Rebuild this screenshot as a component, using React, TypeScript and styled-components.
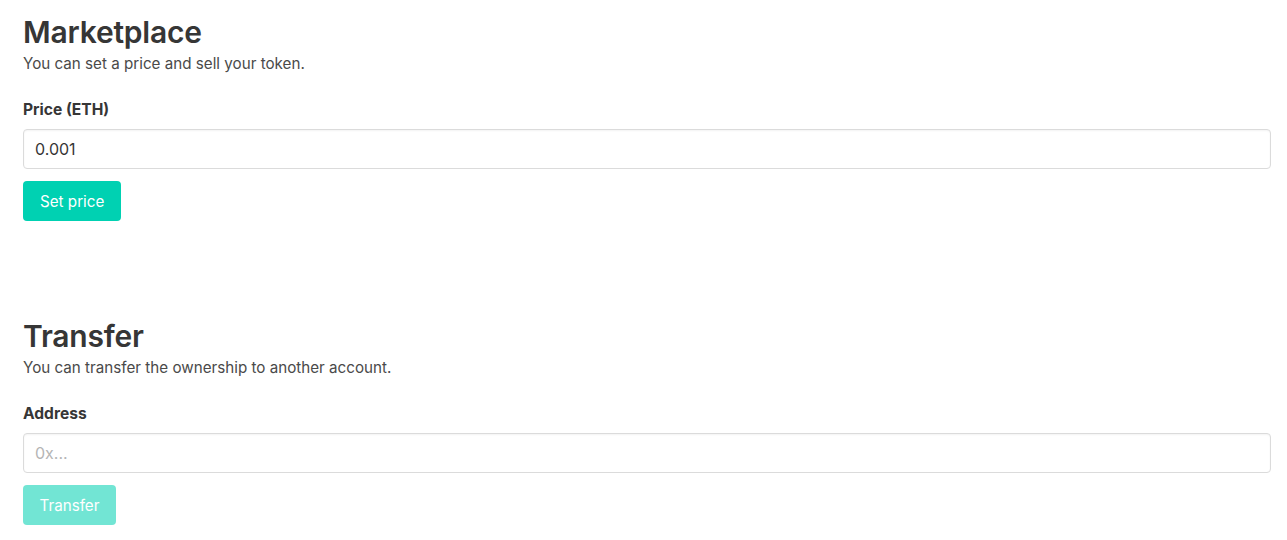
import React from "react";
import styled, { createGlobalStyle } from "styled-components";

const Global = createGlobalStyle`
  body { margin: 0; background: #fff; font-family: Inter, "Noto Sans", sans-serif; color: #363636; }
  * { box-sizing: border-box; }
`;

const Page = styled.div`
  padding: 14px 16px 0 23px;
  display: flex;
  flex-direction: column;
  gap: 97px;
`;

const Section = styled.section`
  display: flex;
  flex-direction: column;
`;

const Title = styled.h1`
  margin: 0;
  font-size: 30px;
  line-height: 36px;
  font-weight: 600;
  color: #363636;
  letter-spacing: -0.2px;
`;

const Subtitle = styled.p`
  margin: 3px 0 0;
  font-size: 15.2px;
  line-height: 22px;
  color: #4a4a4a;
`;

const Label = styled.label`
  margin-top: 24px;
  font-size: 15.6px;
  line-height: 22px;
  font-weight: 700;
  color: #363636;
`;

const Input = styled.input`
  margin-top: 8px;
  width: 100%;
  height: 40px;
  border: 1px solid #dbdbdb;
  border-radius: 4px;
  padding: 0 11px;
  font-family: inherit;
  font-size: 16px;
  color: #363636;
  box-shadow: inset 0 1px 2px rgba(10, 10, 10, 0.05);
  outline: none;
  &::placeholder { color: #b5b5b5; }
`;

const Button = styled.button<{ $disabled?: boolean }>`
  margin-top: 12px;
  align-self: flex-start;
  height: 40px;
  padding: 0 ${(p) => (p.$disabled ? 16.5 : 17)}px;
  border: none;
  border-radius: 4px;
  background: #00d1b2;
  color: #fff;
  font-family: inherit;
  font-size: 15.2px;
  cursor: pointer;
  opacity: ${(p) => (p.$disabled ? 0.55 : 1)};
`;

export default function App() {
  return (
    <>
      <Global />
      <Page>
        <Section>
          <Title>Marketplace</Title>
          <Subtitle>You can set a price and sell your token.</Subtitle>
          <Label>Price (ETH)</Label>
          <Input defaultValue="0.001" />
          <Button>Set price</Button>
        </Section>
        <Section>
          <Title>Transfer</Title>
          <Subtitle>You can transfer the ownership to another account.</Subtitle>
          <Label>Address</Label>
          <Input placeholder="0x..." />
          <Button $disabled disabled>Transfer</Button>
        </Section>
      </Page>
    </>
  );
}
